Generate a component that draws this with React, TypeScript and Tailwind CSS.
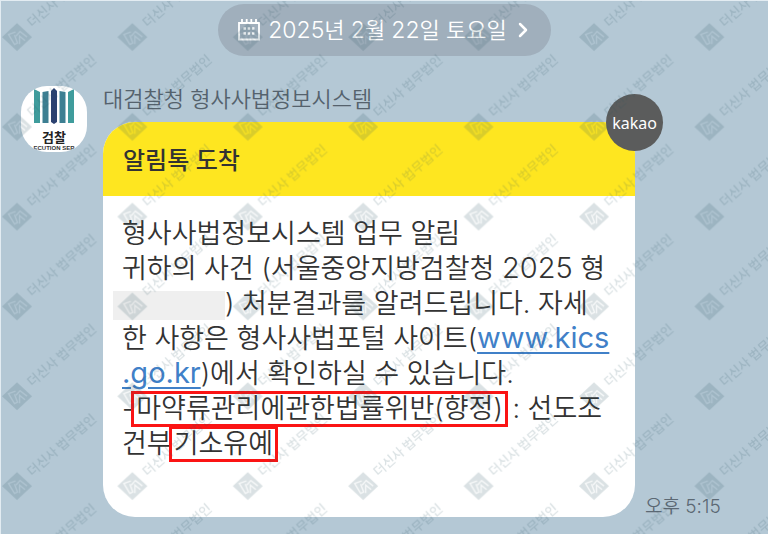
import type { ReactNode } from "react";
import { ChevronRight } from "lucide-react";

function CalendarIcon() {
  return (
    <svg viewBox="0 0 22 22" className="h-[22px] w-[22px]" fill="none" stroke="currentColor" aria-hidden="true">
      <path d="M1 4h20v16.5H1z" strokeWidth="1.8" />
      <path d="M4 0v4M8.7 0v4M13.3 0v4M18 0v4" strokeWidth="1.8" />
      <path d="M5.500 9.5h2.500m1.700 0h2.500m1.700 0h2.500M5.500 14.5h2.500m1.700 0h2.500m1.700 0h2.500" strokeWidth="2.4" />
    </svg>
  );
}

function Avatar() {
  return (
    <div className="mt-0.5 h-[66px] w-[66px] shrink-0 overflow-hidden rounded-[26px] bg-white">
      <svg viewBox="0 0 66 66" className="h-full w-full" role="img" aria-label="검찰">
        <path d="M13 3l6 3v31h-6zM53 3l-6 3v31h6z" fill="#3f9c9c" />
        <path d="M21.500 6l6-1v32h-6zM44.500 6l-6-1v32h6z" fill="#3d7f92" />
        <path d="M33 2l3 3v31l-3 2-3-2V5z" fill="#2b4170" />
        <text
          x="33"
          y="56"
          textAnchor="middle"
          className="fill-[#222] font-['Noto_Sans_CJK_KR',sans-serif] text-[13px] font-bold"
        >
          검찰
        </text>
        <text
          x="33"
          y="64"
          textAnchor="middle"
          className="fill-[#333] font-['Liberation_Sans',sans-serif] text-[6px] font-bold"
        >
          ECUTION SER
        </text>
      </svg>
    </div>
  );
}

/* diagonal law firm mark, tiled over the whole chat */
function Watermark() {
  return (
    <svg className="pointer-events-none absolute inset-0 h-full w-full fill-[#27515e]" aria-hidden="true">
      <defs>
        <mask id="emblem" maskUnits="userSpaceOnUse" x="0" y="56" width="34" height="34">
          <path d="M1 73L16 59 31 73 16 87z" fill="#fff" />
          <g fill="none" stroke="#000" strokeOpacity="0.75" strokeWidth="1.4">
            <path d="M14.500 68l-7 2.500 6 10 3-1.500-3-8" />
            <path d="M15 72l4-4.500 7 5.500M18.500 80v-8l5.500 4.500" />
          </g>
        </mask>
        <pattern id="mark" width="115.4" height="89.8" y="-37" patternUnits="userSpaceOnUse">
          <rect y="56" width="34" height="33" mask="url(#emblem)" />
          <text
            transform="translate(31 64) rotate(-41)"
            className="font-['Noto_Sans_CJK_KR',sans-serif] text-[13px] font-medium"
          >
            더신사 법무법인
          </text>
        </pattern>
      </defs>
      <g opacity="0.17">
        <rect width="100%" height="100%" fill="url(#mark)" />
      </g>
    </svg>
  );
}

function Highlight({ children }: { children: ReactNode }) {
  return (
    <mark className="inline-block bg-transparent px-0.5 leading-[30px] text-inherit outline-[3px] outline-[#fb1414]">
      {children}
    </mark>
  );
}

export default function App() {
  return (
    <main className="relative min-h-screen overflow-hidden border-t border-l border-[#e3ecf2] bg-[#b4c8d5] pt-[3px] font-[Inter,'Noto_Sans_CJK_KR',sans-serif] text-[#333]">
      <div className="flex justify-center">
        <button className="flex h-[52px] items-center gap-2 rounded-full bg-[#a0afbc] px-5 text-[22px] text-white">
          <CalendarIcon />
          <span className="font-[350]">
            <span className="text-[23px]">2025</span>년 <span className="text-[23px]">2</span>월{" "}
            <span className="text-[23px]">22</span>일 토요일
          </span>
          <ChevronRight className="-mx-1 h-6 w-6" strokeWidth={2.5} />
        </button>
      </div>

      <section className="mt-7 flex items-start pl-5">
        <Avatar />
        <div className="ml-4 min-w-0 flex-1">
          <h1 className="text-[22px] leading-[30px] font-[350] text-[#55626d]">대검찰청 형사사법정보시스템</h1>
          <article className="relative mt-2 rounded-[32px] bg-white">
            <header className="flex h-[74px] items-center rounded-t-[32px] bg-[#fee620] px-5 pt-1">
              <h2 className="text-[24px] font-medium">알림톡 도착</h2>
            </header>
            <span className="absolute -top-7 -right-7 flex h-[57px] w-[57px] items-center justify-center rounded-full bg-[#5b5c5c] font-['Noto_Sans',sans-serif] text-[16px] text-white">
              kakao
            </span>
            <p className="px-[19px] pt-5 pb-14 text-[27px] leading-[35px] font-[350] whitespace-nowrap">
              형사사법정보시스템 업무 알림
              <br />
              귀하의 사건 (서울중앙지방검찰청 <span className="text-[29px] leading-none">2025</span> 형
              <br />
              <span className="-ml-[9px] inline-block h-[29px] w-[112px] bg-[#efefef] align-middle" />) 처분결과를
              알려드립니다. 자세
              <br />
              한 사항은 형사사법포털 사이트(
              <a
                href="https://www.kics.go.kr"
                className="text-[29px] leading-none font-normal text-[#4080c8] underline decoration-2 underline-offset-4"
              >
                www.kics
                <br />
                .go.kr
              </a>
              )에서 확인하실 수 있습니다.
              <br />-<Highlight>마약류관리에관한법률위반(향정)</Highlight> : 선도조
              <br />
              건부<Highlight>기소유예</Highlight>
            </p>
          </article>
        </div>
        <time className="w-[133px] shrink-0 self-end pl-[10px] text-[19px] leading-5 font-[350] text-[#5c6974]">
          오후 5:15
        </time>
      </section>

      <Watermark />
    </main>
  );
}
